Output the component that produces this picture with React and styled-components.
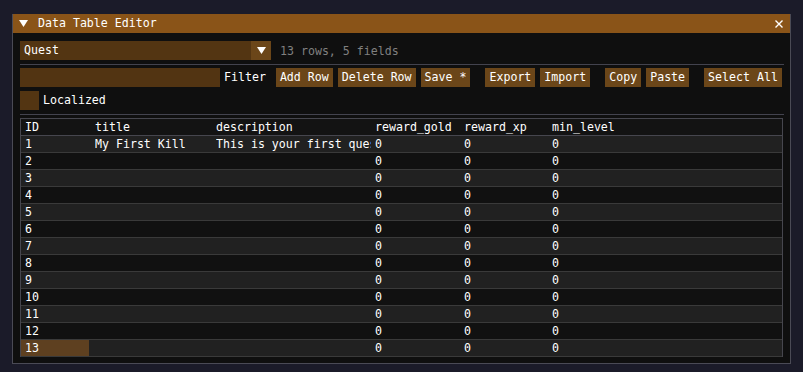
import React from 'react'
import styled, { createGlobalStyle } from 'styled-components'

const GlobalStyle = createGlobalStyle`
    html, body {
        margin: 0;
        background: #1b1b29;
    }
    body {
        font-family: "DejaVu Sans Mono", "Liberation Mono", monospace;
        font-size: 11.6px;
        color: #ffffff;
    }
`

const columns = ['ID', 'title', 'description', 'reward_gold', 'reward_xp', 'min_level']

const rows = Array.from({ length: 13 }, (_, i) => ({
    id: String(i + 1),
    title: i === 0 ? 'My First Kill' : '',
    description: i === 0 ? 'This is your first quest' : '',
    gold: '0',
    xp: '0',
    level: '0',
}))

const App = () => {
    return (
        <Page>
            <GlobalStyle />
            <Window>
                <TitleBar>
                    <TitleArrow viewBox="0 0 9 7">
                        <polygon points="0,0 9,0 4.5,7" fill="#fff" />
                    </TitleArrow>
                    <Title>Data Table Editor</Title>
                    <Close viewBox="0 0 8 8">
                        <path d="M0.5 0.5 L7.5 7.5 M7.5 0.5 L0.5 7.5" stroke="#fff" strokeWidth="1.4" />
                    </Close>
                </TitleBar>
                <Body>
                    <Line>
                        <Combo>
                            <ComboValue>Quest</ComboValue>
                            <ComboButton>
                                <svg width="9" height="7" viewBox="0 0 9 7">
                                    <polygon points="0,0 9,0 4.5,7" fill="#fff" />
                                </svg>
                            </ComboButton>
                        </Combo>
                        <Hint>13 rows, 5 fields</Hint>
                    </Line>
                    <Separator />
                    <Line>
                        <Input />
                        <Label>Filter</Label>
                        <ButtonGroup $gap={10}>
                            <Button>Add Row</Button>
                            <Button>Delete Row</Button>
                            <Button>Save *</Button>
                        </ButtonGroup>
                        <ButtonGroup $gap={15}>
                            <Button>Export</Button>
                            <Button>Import</Button>
                        </ButtonGroup>
                        <ButtonGroup $gap={15}>
                            <Button>Copy</Button>
                            <Button>Paste</Button>
                        </ButtonGroup>
                        <ButtonGroup $gap={15}>
                            <Button>Select All</Button>
                        </ButtonGroup>
                    </Line>
                    <Line>
                        <Checkbox />
                        <Label>Localized</Label>
                    </Line>
                    <Separator />
                    <Table>
                        <Row $header>
                            {columns.map(c => (
                                <Cell key={c}><CellText>{c}</CellText></Cell>
                            ))}
                        </Row>
                        {rows.map((r, i) => (
                            <Row key={r.id} $odd={i % 2 === 0}>
                                <Cell $selected={i === 12}><CellText>{r.id}</CellText></Cell>
                                <Cell><CellText>{r.title}</CellText></Cell>
                                <Cell><CellText>{r.description}</CellText></Cell>
                                <Cell><CellText>{r.gold}</CellText></Cell>
                                <Cell><CellText>{r.xp}</CellText></Cell>
                                <Cell><CellText>{r.level}</CellText></Cell>
                            </Row>
                        ))}
                    </Table>
                </Body>
            </Window>
        </Page>
    )
}

const Page = styled.div`
    padding: 14px 12px 8px 12px;
`

const Window = styled.div`
    width: 779px;
    box-sizing: border-box;
    border: 1px solid #4a4a55;
    background: #0f0f0f;
`

const TitleBar = styled.div`
    height: 19px;
    margin-top: -1px;
    background: #8a5418;
    display: flex;
    align-items: center;
    padding: 0 7px 0 6px;
`

const TitleArrow = styled.svg`
    width: 9px;
    height: 7px;
    margin-right: 10px;
`

const Title = styled.span`
    flex: 1;
    line-height: 19px;
`

const Close = styled.svg`
    width: 8px;
    height: 8px;
`

const Body = styled.div`
    padding: 8px 6px 6px 7px;
    display: flex;
    flex-direction: column;
    gap: 4px;
`

const Line = styled.div`
    display: flex;
    align-items: center;
    height: 19px;
`

const Combo = styled.div`
    width: 251px;
    height: 19px;
    display: flex;
    background: #533512;
`

const ComboValue = styled.div`
    flex: 1;
    line-height: 19px;
    padding-left: 4px;
`

const ComboButton = styled.div`
    width: 20px;
    background: #6b4619;
    display: flex;
    align-items: center;
    justify-content: center;
`

const Hint = styled.span`
    margin-left: 9px;
    color: #808080;
`

const Separator = styled.div`
    height: 1px;
    background: #43434e;
    margin-bottom: -1px;
`

const Input = styled.div`
    width: 200px;
    height: 19px;
    background: #523412;
`

const Label = styled.span`
    margin-left: 4px;
    line-height: 19px;
`

const ButtonGroup = styled.div`
    display: flex;
    gap: 5px;
    margin-left: ${p => p.$gap}px;
`

const Button = styled.div`
    height: 19px;
    line-height: 19px;
    padding: 0 4px;
    background: #6b4619;
    white-space: nowrap;
`

const Checkbox = styled.div`
    width: 19px;
    height: 19px;
    background: #533512;
`

const Table = styled.div`
    border: 1px solid #46464e;
    border-bottom: none;
    margin-right: 1px;
`

const Row = styled.div`
    display: grid;
    grid-template-columns: 70px 121px 159px 89px 88px 1fr;
    height: 16px;
    border-bottom: 1px solid ${p => (p.$header ? '#46464e' : '#3a3a3a')};
    background: ${p => (p.$header ? '#131313' : p.$odd ? '#212121' : '#111111')};
`

const Cell = styled.div`
    padding: 0 0 0 4px;
    line-height: 16px;
    overflow: hidden;
    background: ${p => (p.$selected ? 'linear-gradient(#5e4020, #5e4020) no-repeat' : 'transparent')};
    background-size: 68px 100%;
`

const CellText = styled.div`
    white-space: nowrap;
    overflow: hidden;
`

export default App
